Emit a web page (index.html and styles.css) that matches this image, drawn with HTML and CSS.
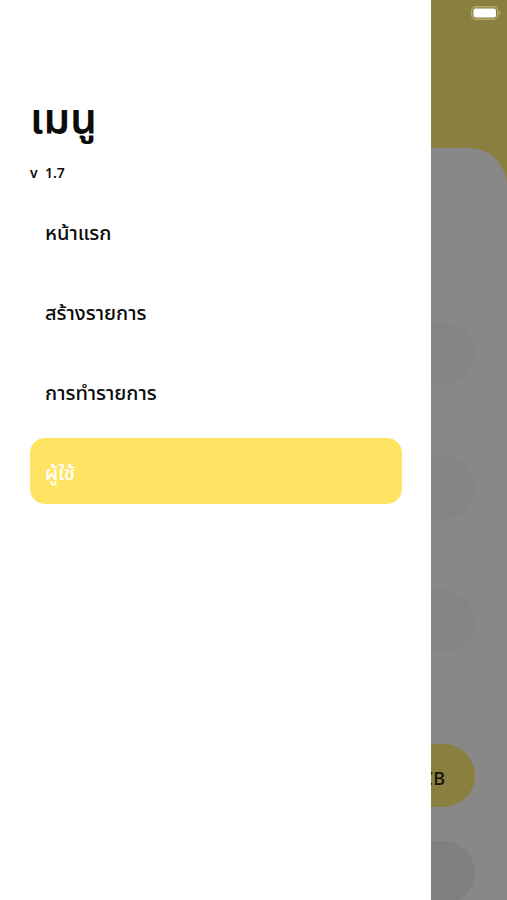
FILE: index.html
```html
<!DOCTYPE html>
<html lang="th">
<head>
<meta charset="utf-8">
<meta name="viewport" content="width=device-width, initial-scale=1">
<title>เมนู</title>
<link rel="stylesheet" href="styles.css">
</head>
<body>
<main class="screen" inert>
  <div class="status">
    <svg class="battery" viewBox="0 0 30 14" aria-hidden="true">
      <rect x="0.75" y="0.75" width="26" height="12.5" rx="4" fill="none" stroke="#b5aa70" stroke-width="1.3"/>
      <rect x="2.5" y="2.5" width="22.5" height="9" rx="2" fill="#fff"/>
      <path d="M28 4.8c2 .7 2 3.700 0 4.400z" fill="#b5aa70"/>
    </svg>
  </div>
  <form class="sheet">
    <input class="field" type="text" aria-label="ชื่อ">
    <input class="field" type="text" aria-label="ผู้ใช้">
    <input class="field" type="text" aria-label="บัญชี">
    <button class="bank" type="button">SCB</button>
    <button class="plain" type="button" aria-label="รายการ"></button>
  </form>
</main>
<aside class="drawer">
  <h1 class="title">เมนู</h1>
  <p class="version">v&nbsp; 1.7</p>
  <nav class="menu">
    <a class="item" href="#home">หน้าแรก</a>
    <a class="item" href="#create">สร้างรายการ</a>
    <a class="item" href="#manage">การทำรายการ</a>
    <a class="item active" href="#user" aria-current="page">ผู้ใช้</a>
  </nav>
</aside>
</body>
</html>
```
FILE: styles.css
```css
* {
  box-sizing: border-box;
}

body {
  margin: 0;
  position: relative;
  min-height: 100vh;
  overflow: hidden;
  font-family: "Noto Sans Thai", "Noto Sans", sans-serif;
  color: #0c0c0c;
  background: #888;
}

.screen {
  height: 100vh;
  display: flex;
  flex-direction: column;
  overflow: hidden;
  background: #897f3e;
}

.status {
  flex: none;
  height: 148px;
  padding: 6px 6px 0;
  display: flex;
  justify-content: flex-end;
  align-items: flex-start;
}

.battery {
  width: 30px;
  height: 14px;
}

.sheet {
  flex: 1;
  padding: 174px 32px 0;
  border-radius: 38px 38px 0 0;
  background: #888;
  display: flex;
  flex-direction: column;
}

.field,
.bank,
.plain {
  flex: none;
  width: 100%;
  height: 63px;
  padding: 0 30px;
  border: 0;
  border-radius: 32px;
  font: inherit;
}

.field {
  margin-bottom: 71px;
  background: #858585;
}

.bank {
  margin: 20px 0 34px;
  padding-top: 8px;
  background: #897f3e;
  color: #141208;
  font-size: 18px;
  font-weight: 500;
  text-align: right;
}

.plain {
  background: #808080;
}

.drawer {
  position: absolute;
  inset: 0 15% 0 0;
  padding: 90px 29px 0 30px;
  background: #fff;
}

.title {
  margin: 0;
  font-size: 42px;
  line-height: 60px;
  font-weight: 600;
}

.version {
  margin: 13px 0 13px;
  font-size: 14px;
  line-height: 22px;
  font-weight: 600;
}

.menu {
  display: flex;
  flex-direction: column;
  gap: 14px;
}

.item {
  display: flex;
  align-items: center;
  height: 66px;
  padding: 6px 15px 0;
  border-radius: 15px;
  color: inherit;
  font-size: 20px;
  font-weight: 500;
  text-decoration: none;
}

.active {
  background: #ffe464;
  color: #fff;
}
```
